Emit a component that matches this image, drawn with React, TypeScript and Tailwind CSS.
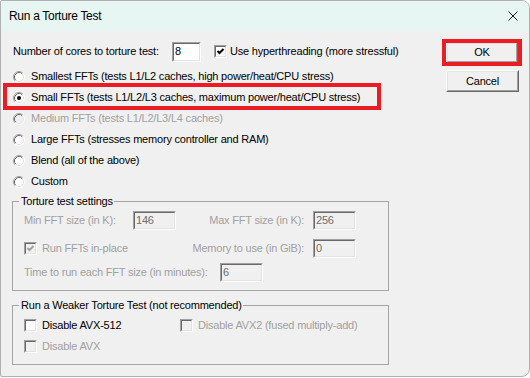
import React from 'react';

type BoxProps = {
  className?: string;
  fill?: string;
  children?: React.ReactNode;
};

// classic two-pixel sunken edge used by edit boxes and check boxes
function Sunken({ className = '', fill = 'bg-white', children }: BoxProps) {
  return (
    <div className={`border border-t-[#a0a0a0] border-l-[#a0a0a0] border-r-white border-b-white ${className}`}>
      <div className={`h-full w-full border border-t-[#696969] border-l-[#696969] border-r-[#e3e3e3] border-b-[#e3e3e3] ${fill}`}>
        {children}
      </div>
    </div>
  );
}

function Field({ value, disabled, className = '' }: { value: string; disabled?: boolean; className?: string }) {
  return (
    <Sunken className={`shrink-0 ${className}`} fill={disabled ? 'bg-[#f0f0f0]' : 'bg-white'}>
      <div className={`h-full flex items-center pl-[1px] ${disabled ? 'text-[#6d6d6d]' : 'text-black'}`}>{value}</div>
    </Sunken>
  );
}

function Check({ checked, disabled }: { checked?: boolean; disabled?: boolean }) {
  return (
    <Sunken className="w-[13px] h-[13px] shrink-0" fill={disabled ? 'bg-[#f0f0f0]' : 'bg-white'}>
      {checked && (
        <svg width="9" height="9" viewBox="0 0 9 9" className="block">
          <polyline
            points="1.5,4 3.5,6 7.5,2"
            fill="none"
            stroke={disabled ? '#a0a0a0' : '#000'}
            strokeWidth="2"
          />
        </svg>
      )}
    </Sunken>
  );
}

function Radio({ checked, disabled }: { checked?: boolean; disabled?: boolean }) {
  return (
    <svg width="12" height="12" viewBox="0 0 12 12" className="shrink-0">
      <circle cx="6" cy="6" r="4.5" fill={disabled ? '#f0f0f0' : '#fff'} />
      <path d="M2.11 9.89 A5.5 5.5 0 0 1 9.89 2.11" fill="none" stroke="#a0a0a0" />
      <path d="M9.89 2.11 A5.5 5.5 0 0 1 2.11 9.89" fill="none" stroke="#fff" />
      <path d="M2.82 9.18 A4.5 4.5 0 0 1 9.18 2.82" fill="none" stroke="#696969" />
      <path d="M9.18 2.82 A4.5 4.5 0 0 1 2.82 9.18" fill="none" stroke="#e3e3e3" />
      {checked && <circle cx="6" cy="6" r="2" fill="#000" />}
    </svg>
  );
}

function RadioRow({ label, checked, disabled }: { label: string; checked?: boolean; disabled?: boolean }) {
  return (
    <div className="h-[21px] flex items-center pl-[1px] whitespace-nowrap">
      <Radio checked={checked} disabled={disabled} />
      <span className={`ml-[6px] ${disabled ? 'text-[#a0a0a0]' : ''}`}>{label}</span>
    </div>
  );
}

function Button({ label, className = '' }: { label: string; className?: string }) {
  return (
    <div className={`border border-t-white border-l-white border-r-[#696969] border-b-[#696969] ${className}`}>
      <div className="h-full w-full border border-t-[#e3e3e3] border-l-[#e3e3e3] border-r-[#a0a0a0] border-b-[#a0a0a0] bg-[#f0f0f0] flex items-center justify-center">
        {label}
      </div>
    </div>
  );
}

export default function App() {
  return (
    <div className="w-[530px] h-[378px] bg-white font-['Liberation_Sans',Arial,sans-serif] text-[11px] tracking-[-0.2px] text-black leading-[13px] whitespace-nowrap">
      <div className="w-[530px] h-[377px] flex flex-col border border-[#b0b0b0] rounded-tr-[8px] rounded-br-[8px] rounded-tl-[2px] rounded-bl-[2px] overflow-hidden bg-[#f0f0f0]">
        {/* title bar */}
        <div className="h-[30px] shrink-0 bg-[#e8f6f3] flex items-center justify-between pl-[8px] pr-[11px]">
          <span className="text-[12px] tracking-[-0.3px]">Run a Torture Test</span>
          <svg width="10" height="10" viewBox="0 0 10 10">
            <path d="M0.5 0.5 L9.5 9.5 M9.5 0.5 L0.5 9.5" stroke="#1a1a1a" strokeWidth="1" />
          </svg>
        </div>

        <div className="flex flex-1 pl-[11px] pt-[10px]">
          {/* left column */}
          <div className="w-[377px] shrink-0 flex flex-col">
            <div className="h-[21px] flex items-center">
              <span className="w-[160px] shrink-0 pl-[1px]">Number of cores to torture test:</span>
              <Field value="8" className="w-[29px] h-[20px]" />
              <div className="ml-[13px]">
                <Check checked />
              </div>
              <span className="ml-[3px]">Use hyperthreading (more stressful)</span>
            </div>

            <div className="mt-[4px]">
              <RadioRow label="Smallest FFTs (tests L1/L2 caches, high power/heat/CPU stress)" />
              <div className="relative">
                <RadioRow label="Small FFTs (tests L1/L2/L3 caches, maximum power/heat/CPU stress)" checked />
                <div className="absolute left-[-9px] top-[-4px] w-[378px] h-[27px] border-4 border-[#ea1d25]" />
              </div>
              <RadioRow label="Medium FFTs (tests L1/L2/L3/L4 caches)" disabled />
              <RadioRow label="Large FFTs (stresses memory controller and RAM)" />
              <RadioRow label="Blend (all of the above)" />
              <RadioRow label="Custom" />
            </div>

            <fieldset className="mt-[3px] w-[377px] border border-[#a5a5a5] pb-[8px]">
              <legend className="ml-[6px] pl-[2px] pr-[1px] leading-[13px]">Torture test settings</legend>
              <div className="mt-[3px] h-[19px] flex items-center pl-[11px] text-[#a0a0a0]">
                <span className="w-[109px] shrink-0">Min FFT size (in K):</span>
                <Field value="146" disabled className="w-[43px] h-[19px]" />
                <span className="w-[137px] shrink-0 text-right pr-[9px]">Max FFT size (in K):</span>
                <Field value="256" disabled className="w-[43px] h-[19px]" />
              </div>
              <div className="mt-[9px] h-[19px] flex items-center pl-[11px] text-[#a0a0a0]">
                <div className="w-[152px] shrink-0 flex items-center">
                  <Check checked disabled />
                  <span className="ml-[5px]">Run FFTs in-place</span>
                </div>
                <span className="w-[137px] shrink-0 text-right pr-[9px]">Memory to use (in GiB):</span>
                <Field value="0" disabled className="w-[43px] h-[19px]" />
              </div>
              <div className="mt-[5px] h-[19px] flex items-center pl-[11px] text-[#a0a0a0]">
                <span className="w-[196px] shrink-0">Time to run each FFT size (in minutes):</span>
                <Field value="6" disabled className="w-[43px] h-[19px]" />
              </div>
            </fieldset>

            <fieldset className="mt-[8px] w-[377px] border border-[#a5a5a5] pb-[7px]">
              <legend className="ml-[6px] pl-[2px] pr-[1px] leading-[13px]">Run a Weaker Torture Test (not recommended)</legend>
              <div className="mt-[3px] h-[21px] flex items-center pl-[11px]">
                <div className="w-[156px] shrink-0 flex items-center">
                  <Check />
                  <span className="ml-[5px]">Disable AVX-512</span>
                </div>
                <Check disabled />
                <span className="ml-[5px] text-[#a0a0a0]">Disable AVX2 (fused multiply-add)</span>
              </div>
              <div className="h-[21px] flex items-center pl-[11px] text-[#a0a0a0]">
                <Check disabled />
                <span className="ml-[5px]">Disable AVX</span>
              </div>
            </fieldset>
          </div>

          {/* right column */}
          <div className="ml-[57px] pt-[1px] flex flex-col">
            <div className="relative">
              <Button label="OK" className="w-[72px] h-[21px]" />
              <div className="absolute left-[-4px] top-[-3px] w-[80px] h-[27px] border-4 border-[#ea1d25]" />
            </div>
            <Button label="Cancel" className="mt-[7px] w-[73px] h-[22px]" />
          </div>
        </div>
      </div>
    </div>
  );
}
